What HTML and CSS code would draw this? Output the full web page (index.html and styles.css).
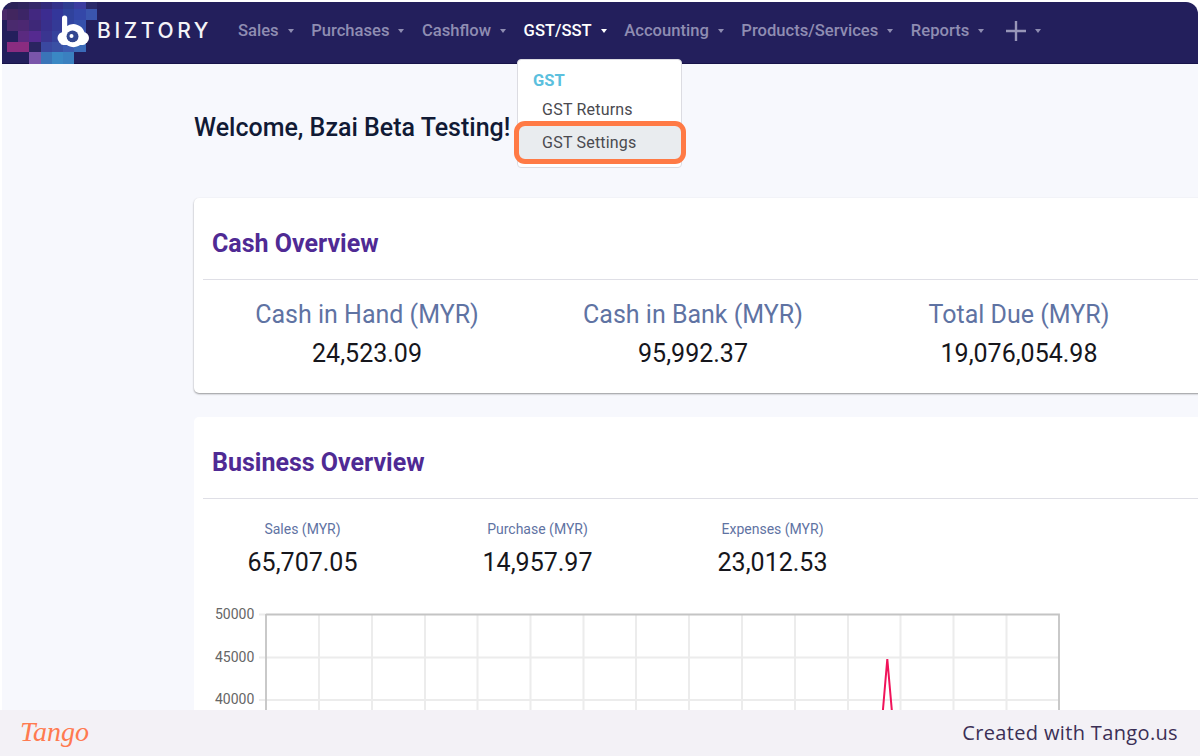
FILE: index.html
```html
<!DOCTYPE html>
<html lang="en">
<head>
<meta charset="utf-8">
<title>Biztory</title>
<link rel="stylesheet" href="styles.css">
</head>
<body>
<div class="frame">
  <header class="topbar">
    <svg class="mosaic" width="100" height="62" viewBox="2 2 100 62" aria-hidden="true">
      <g>
        <rect x="7" y="2" width="11" height="7" fill="#2c2358"/><rect x="18" y="2" width="11" height="7" fill="#30255e"/><rect x="29" y="2" width="12" height="7" fill="#35286a"/><rect x="41" y="2" width="11" height="7" fill="#32297a"/><rect x="52" y="2" width="11" height="7" fill="#33318a"/><rect x="63" y="2" width="11" height="7" fill="#2f3d90"/><rect x="74" y="2" width="12" height="7" fill="#3c3da0"/><rect x="86" y="2" width="11" height="7" fill="#2a2a6a"/>
        <rect x="2" y="9" width="5" height="11" fill="#4a2a68"/><rect x="7" y="9" width="11" height="11" fill="#42265f"/><rect x="18" y="9" width="11" height="11" fill="#3c2566"/><rect x="29" y="9" width="12" height="11" fill="#422880"/><rect x="41" y="9" width="11" height="11" fill="#3c2c90"/><rect x="52" y="9" width="11" height="11" fill="#33369a"/><rect x="63" y="9" width="11" height="11" fill="#30429c"/><rect x="74" y="9" width="12" height="11" fill="#3447a8"/><rect x="86" y="9" width="11" height="11" fill="#3a55ae"/>
        <rect x="7" y="20" width="11" height="11" fill="#4a2a6e"/><rect x="18" y="20" width="11" height="11" fill="#4c2872"/><rect x="29" y="20" width="12" height="11" fill="#3e2878"/><rect x="41" y="20" width="11" height="11" fill="#38308c"/><rect x="52" y="20" width="11" height="11" fill="#343a96"/><rect x="63" y="20" width="11" height="11" fill="#3245a0"/><rect x="74" y="20" width="12" height="11" fill="#3550ab"/>
        <rect x="18" y="31" width="11" height="11" fill="#5a2a80"/><rect x="29" y="31" width="12" height="11" fill="#552a90"/><rect x="41" y="31" width="11" height="11" fill="#3a3590"/><rect x="52" y="31" width="11" height="11" fill="#35429c"/><rect x="63" y="31" width="23" height="11" fill="#3a52ae"/>
        <rect x="7" y="42" width="22" height="10" fill="#8a2c80"/><rect x="29" y="42" width="12" height="10" fill="#2a2460"/><rect x="41" y="42" width="11" height="10" fill="#3a48a0"/><rect x="52" y="42" width="11" height="10" fill="#3a50a4"/><rect x="63" y="42" width="11" height="10" fill="#3d5bb0"/><rect x="74" y="42" width="12" height="10" fill="#3a6ab8"/>
        <rect x="29" y="52" width="12" height="12" fill="#7a55aa"/><rect x="41" y="52" width="11" height="12" fill="#3a74b8"/><rect x="52" y="52" width="11" height="12" fill="#3a88c4"/><rect x="63" y="52" width="11" height="12" fill="#3a80c0"/>
      </g>
      <g fill="#fff">
        <path d="M62 18a2.600 2.600 0 0 1 5.200 0V26A11.500 11.500 0 1 1 62 36Z"/>
        <circle cx="63.500" cy="38" r="6"/><circle cx="83" cy="38" r="6"/>
        <rect x="60" y="38" width="26" height="7" rx="3.500"/>
      </g>
      <circle cx="72.500" cy="36.500" r="6" fill="#33478f"/>
      <path d="M66.500 36.500a6 6 0 0 0 6 6a6 6 0 0 0 4-1.500a5 5 0 0 1-10-4.500Z" fill="#fff"/>
      <circle cx="71.500" cy="36" r="2" fill="#fff"/>
    </svg>
    <div class="brand">BIZTORY</div>
    <nav class="nav">
      <a class="nav-item">Sales<span class="caret"></span></a>
      <a class="nav-item">Purchases<span class="caret"></span></a>
      <a class="nav-item">Cashflow<span class="caret"></span></a>
      <a class="nav-item active">GST/SST<span class="caret"></span>
        <div class="menu">
          <div class="menu-head">GST</div>
          <div class="menu-row">GST Returns</div>
          <div class="menu-row selected">GST Settings</div>
        </div>
      </a>
      <a class="nav-item">Accounting<span class="caret"></span></a>
      <a class="nav-item">Products/Services<span class="caret"></span></a>
      <a class="nav-item">Reports<span class="caret"></span></a>
      <a class="nav-item plus-item">
        <svg class="plus" width="22" height="22" viewBox="0 0 22 22" aria-hidden="true"><path d="M11 1V21M1 11H21" stroke="#9896b8" stroke-width="2.400" fill="none"/></svg>
        <span class="caret"></span>
      </a>
    </nav>
  </header>
  <main class="content">
    <h1 class="welcome">Welcome, Bzai Beta Testing!</h1>
    <section class="card cash">
      <h2 class="card-title">Cash Overview</h2>
      <div class="cash-stats">
        <div class="stat"><div class="stat-label">Cash in Hand (MYR)</div><div class="stat-value">24,523.09</div></div>
        <div class="stat"><div class="stat-label">Cash in Bank (MYR)</div><div class="stat-value">95,992.37</div></div>
        <div class="stat"><div class="stat-label">Total Due (MYR)</div><div class="stat-value">19,076,054.98</div></div>
      </div>
    </section>
    <section class="card business">
      <h2 class="card-title">Business Overview</h2>
      <div class="biz-stats">
        <div class="stat"><div class="stat-label small">Sales (MYR)</div><div class="stat-value">65,707.05</div></div>
        <div class="stat"><div class="stat-label small">Purchase (MYR)</div><div class="stat-value">14,957.97</div></div>
        <div class="stat"><div class="stat-label small">Expenses (MYR)</div><div class="stat-value">23,012.53</div></div>
      </div>
      <svg class="chart" width="860" height="130" viewBox="210 598 860 130" aria-hidden="true">
        <g stroke="#ececec" stroke-width="2" fill="none">
          <path d="M319 614V730M372 614V730M425 614V730M477.500 614V730M530.500 614V730M583.500 614V730M636 614V730M689 614V730M742 614V730M795 614V730M848 614V730M900.500 614V730M953.500 614V730M1006.500 614V730"/>
          <path d="M259 657.500H1059M259 700H1059M259 614.500H266"/>
        </g>
        <path d="M266 614.500H1059V730M266 614V730" stroke="#c4c4c4" stroke-width="1.800" fill="none"/>
        <path d="M880.800 735L887.300 659L894 735" stroke="#f0135a" stroke-width="2" fill="none"/>
        <g class="axis">
          <text x="215" y="619">50000</text>
          <text x="215" y="662">45000</text>
          <text x="215" y="704">40000</text>
        </g>
      </svg>
    </section>
  </main>
</div>
<footer class="footer">
  <span class="tango">Tango</span>
  <span class="credit">Created with Tango.us</span>
</footer>
</body>
</html>
```
FILE: styles.css
```css
* { box-sizing: border-box; }
html, body { margin: 0; padding: 0; height: 756px; overflow: hidden; background: #fff; }
body { font-family: Roboto, "Liberation Sans", sans-serif; }

.frame {
  margin: 2px 2px 0 2px;
  height: 708px;
  overflow: hidden;
  border-radius: 12px 12px 0 0;
  background: #f7f8fd;
}

.topbar {
  position: relative;
  display: flex;
  align-items: center;
  height: 62px;
  padding: 0 0 4px 95px;
  background: #231f5c;
  border-bottom: 1px solid #17134a;
}
.mosaic { position: absolute; left: 0; top: 0; }
.brand {
  position: relative;
  font-family: Inter, sans-serif;
  font-size: 21px;
  font-weight: 500;
  letter-spacing: 3.600px;
  color: #f4f4f8;
  width: 141px;
}
.nav { display: flex; align-items: center; gap: 17.500px; }
.nav-item {
  position: relative;
  display: flex;
  align-items: center;
  font-size: 16.600px;
  font-weight: 500;
  color: #8f8db2;
  white-space: nowrap;
}
.nav-item.active { color: #fff; }
.caret {
  margin-left: 9px;
  width: 0;
  height: 0;
  border-left: 3.800px solid transparent;
  border-right: 3.800px solid transparent;
  border-top: 4px solid currentColor;
}
.plus-item { margin-left: 3px; }
.plus { display: block; }
.plus-item .caret { margin-left: 8px; }

.menu {
  position: absolute;
  left: -6.500px;
  top: 38px;
  width: 165px;
  height: 109px;
  padding: 11px 0 0;
  background: #fff;
  border: 1px solid #dcdce2;
  border-radius: 4px;
  font-weight: 400;
  z-index: 5;
}
.menu-head {
  padding-left: 15px;
  height: 20px;
  line-height: 20px;
  font-size: 16.500px;
  font-weight: 700;
  color: #5bc0de;
}
.menu-row {
  position: relative;
  height: 33px;
  line-height: 33px;
  padding-left: 24px;
  font-size: 16px;
  letter-spacing: 0.200px;
  color: #4a4a4f;
}
.menu-head + .menu-row { margin-top: 2px; }
.menu-row.selected { background: #e9ecef; }
.menu-row.selected::after {
  content: "";
  position: absolute;
  left: -4px;
  right: -5px;
  top: -5px;
  bottom: -5px;
  border: 5px solid #ff7a45;
  border-radius: 11px;
}

.content { padding: 0 0 0 192px; }
.welcome {
  margin: 0;
  padding-top: 49px;
  height: 134px;
  font-size: 25px;
  line-height: 30px;
  font-weight: 500;
  color: #111a35;
}
.card {
  margin-right: -12px;
  padding: 0 9px;
  background: #fff;
  border-radius: 5px;
}
.cash { height: 195px; box-shadow: 0 1px 2px rgba(0,0,0,.4); margin-bottom: 24px; }
.business { height: 400px; }
.card-title {
  margin: 0;
  height: 82px;
  padding: 31px 0 0 9px;
  line-height: 30px;
  font-size: 25px;
  font-weight: 700;
  color: #4f2a94;
  border-bottom: 1px solid #dfdfe6;
}
.cash-stats { display: grid; grid-template-columns: repeat(3, 326px); padding-top: 17px; margin-left: 1px; }
.biz-stats { display: grid; grid-template-columns: repeat(3, 235px); padding-top: 20px; margin-left: -18px; width: max-content; }
.stat { text-align: center; }
.stat-label { font-size: 25px; line-height: 36px; color: #5f73a3; }
.stat-label.small { font-size: 14px; line-height: 20px; }
.stat-value { font-size: 25px; line-height: 40px; color: #16161c; }
.cash-stats .stat-value { margin-top: 1px; }
.biz-stats .stat-value { margin-top: 4px; }
.chart { display: block; margin: 15px 0 0 7px; }
.axis text { font-family: Roboto, sans-serif; font-size: 14px; fill: #666; }

.footer {
  height: 46px;
  display: flex;
  align-items: center;
  justify-content: space-between;
  padding: 0 22px 2px 20px;
  background: #f3f1f6;
}
.tango {
  font-family: "Liberation Serif", serif;
  font-style: italic;
  font-size: 28px;
  color: #ff7a50;
}
.credit {
  font-family: "Open Sans", sans-serif;
  font-size: 20px;
  letter-spacing: 0.350px;
  color: #3b2f55;
}
```
